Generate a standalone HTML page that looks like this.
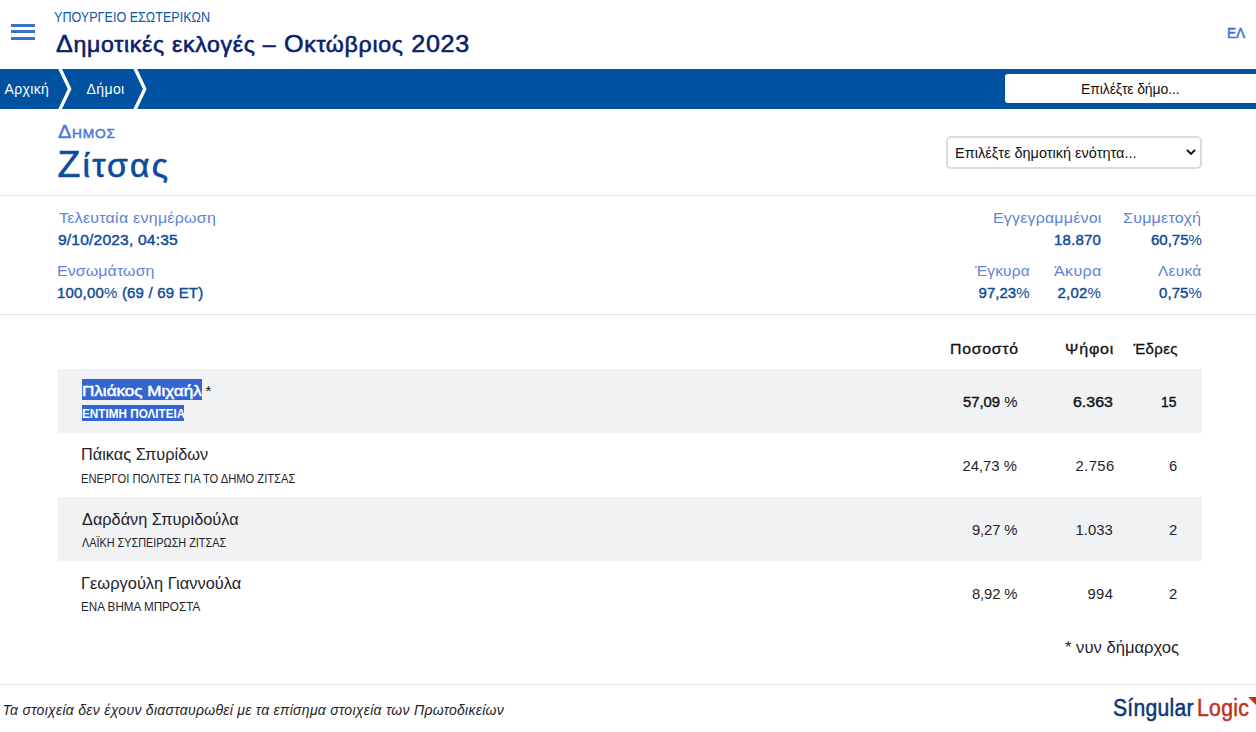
<!DOCTYPE html>
<html lang="el"><head><meta charset="utf-8"><title>Δημοτικές εκλογές – Οκτώβριος 2023</title>
<style>
html,body{margin:0;padding:0;}
body{width:1256px;height:732px;overflow:hidden;position:relative;background:#fff;font-family:"Liberation Sans",sans-serif;}
.t{position:absolute;white-space:nowrap;line-height:1.118;transform-origin:0 0;}
.bm{display:inline-block;width:0;height:0;vertical-align:baseline;}
.pc{font-weight:400;-webkit-text-stroke-width:0;}
.pcs{font-weight:400;-webkit-text-stroke-width:0;}
.abs{position:absolute;}


</style></head><body>
<div class="abs" style="left:11px;top:24px;width:24px;height:3px;background:#3b70cc"></div>
<div class="abs" style="left:11px;top:30.3px;width:24px;height:3px;background:#3b70cc"></div>
<div class="abs" style="left:11px;top:37px;width:24px;height:3px;background:#3b70cc"></div>
<div class="abs" style="left:0;top:69px;width:1256px;height:40px;background:#0052a0"></div>
<svg class="abs" style="left:0;top:69px" width="200" height="40"><polygon points="58.3,0 62,0 71.5,20 62,40 58.3,40 67.8,20" fill="#fff"/><polygon points="133.4,0 137.2,0 146.6,20 137.2,40 133.4,40 142.9,20" fill="#fff"/></svg>
<div class="abs" style="left:1005px;top:74px;width:260px;height:29px;background:#fff;border-radius:3px"></div>
<div class="abs" style="left:946px;top:136px;width:252px;height:28.7px;border:2px solid #d6dce4;border-radius:5px;background:#fff"></div>
<svg class="abs" style="left:1185px;top:148px" width="12" height="9"><polyline points="1.9,1.9 6,5.9 10.1,1.9" fill="none" stroke="#111" stroke-width="2"/></svg>
<div class="abs" style="left:0;top:195px;width:1256px;height:1px;background:#dfe3e8"></div>
<div class="abs" style="left:0;top:314px;width:1256px;height:1px;background:#dfe3e8"></div>
<div class="abs" style="left:58px;top:369px;width:1144px;height:64px;background:#f1f2f4"></div>
<div class="abs" style="left:58px;top:497px;width:1144px;height:64px;background:#f1f2f4"></div>
<div class="abs" style="left:82px;top:379px;width:120px;height:21px;background:#3365d3"></div>
<div class="abs" style="left:82px;top:405px;width:102px;height:16px;background:#3365d3"></div>
<div class="abs" style="left:0;top:684px;width:1256px;height:1px;background:#dfe3e8"></div>
<svg class="abs" style="left:1240px;top:690px" width="16" height="20"><polygon points="8.3,7 16,7 16,15" fill="#c0301c"/></svg>

<div id="ministry" class="t" style="left:54.00px;top:9.00px;font-size:14.50px;font-weight:400;color:#0e58a8;transform:scaleX(0.8668);">ΥΠΟΥΡΓΕΙΟ ΕΣΩΤΕΡΙΚΩΝ<i class="bm"></i></div>
<div id="title" class="t" style="left:55.50px;top:30.60px;font-size:23.50px;font-weight:400;-webkit-text-stroke:0.55px #08216c;color:#08216c;letter-spacing:0.629px;transform:scaleX(1.0700);">Δ<span style="font-size:0.92em">ημοτικές εκλογές –</span> Ο<span style="font-size:0.92em">κτώβριος</span> 2023<i class="bm"></i></div>
<div id="lang" class="t" style="left:1227.00px;top:23.91px;font-size:15.20px;font-weight:400;-webkit-text-stroke:0.5px #3b6fd4;color:#3b6fd4;transform:scaleX(0.8943);">ΕΛ<i class="bm"></i></div>
<div id="bc1" class="t" style="left:4.50px;top:82.00px;font-size:14.00px;font-weight:400;color:#ffffff;letter-spacing:0.360px;">Αρχική<i class="bm"></i></div>
<div id="bc2" class="t" style="left:86.50px;top:82.00px;font-size:14.00px;font-weight:400;color:#ffffff;letter-spacing:0.405px;">Δήμοι<i class="bm"></i></div>
<div id="search" class="t" style="left:1081.00px;top:81.60px;font-size:14.00px;font-weight:400;color:#111111;letter-spacing:-0.120px;">Επιλέξτε δήμο...<i class="bm"></i></div>
<div id="dimos" class="t" style="left:58.00px;top:120.81px;font-size:18.90px;font-weight:400;-webkit-text-stroke:0.5px #4a7ad6;color:#4a7ad6;letter-spacing:0.683px;transform:scaleX(1.0600);font-variant:small-caps;">Δημος<i class="bm"></i></div>
<div id="zitsas" class="t" style="left:57.50px;top:143.91px;font-size:37.40px;font-weight:400;-webkit-text-stroke:0.6px #0b4a9e;color:#0b4a9e;letter-spacing:2.160px;">Ζ<span style="font-size:0.9em">ίτσας</span><i class="bm"></i></div>
<div id="seltxt" class="t" style="left:955.00px;top:145.00px;font-size:14.50px;font-weight:400;color:#111111;letter-spacing:0.007px;">Επιλέξτε δημοτική ενότητα...<i class="bm"></i></div>
<div id="lbl1" class="t" style="left:58.50px;top:209.32px;font-size:15.50px;font-weight:400;color:#5f82d6;letter-spacing:0.257px;transform:scaleX(1.0300);">Τελευταία ενημέρωση<i class="bm"></i></div>
<div id="val1" class="t" style="left:58.00px;top:231.82px;font-size:15.00px;font-weight:400;-webkit-text-stroke:0.42px #0f4a98;color:#0f4a98;letter-spacing:0.167px;transform:scaleX(1.0400);">9/10/2023, 04:35<i class="bm"></i></div>
<div id="lbl2" class="t" style="left:57.00px;top:262.21px;font-size:15.50px;font-weight:400;color:#5f82d6;letter-spacing:0.089px;transform:scaleX(1.0300);">Ενσωμάτωση<i class="bm"></i></div>
<div id="val2" class="t" style="left:57.00px;top:284.71px;font-size:15.00px;font-weight:400;-webkit-text-stroke:0.42px #0f4a98;color:#0f4a98;letter-spacing:0.189px;">100,00<span class="pc">%</span> (69 / 69 ΕΤ)<i class="bm"></i></div>
<div id="lbl3" class="t" style="left:993.00px;top:209.00px;font-size:15.50px;font-weight:400;color:#5f82d6;letter-spacing:0.186px;transform:scaleX(1.0300);">Εγγεγραμμένοι<i class="bm"></i></div>
<div id="lbl4" class="t" style="left:1123.00px;top:209.00px;font-size:15.50px;font-weight:400;color:#5f82d6;letter-spacing:0.173px;transform:scaleX(1.0400);">Συμμετοχή<i class="bm"></i></div>
<div id="val3" class="t" style="left:1054.00px;top:231.82px;font-size:15.00px;font-weight:400;-webkit-text-stroke:0.42px #0f4a98;color:#0f4a98;letter-spacing:0.216px;">18.870<i class="bm"></i></div>
<div id="val4" class="t" style="left:1151.00px;top:231.82px;font-size:15.00px;font-weight:400;-webkit-text-stroke:0.42px #0f4a98;color:#0f4a98;">60,75<span class="pc">%</span><i class="bm"></i></div>
<div id="lbl5" class="t" style="left:975.00px;top:262.00px;font-size:15.50px;font-weight:400;color:#5f82d6;letter-spacing:0.144px;">Έγκυρα<i class="bm"></i></div>
<div id="lbl6" class="t" style="left:1053.50px;top:262.00px;font-size:15.50px;font-weight:400;color:#5f82d6;letter-spacing:0.286px;transform:scaleX(1.0400);">Άκυρα<i class="bm"></i></div>
<div id="lbl7" class="t" style="left:1158.00px;top:262.00px;font-size:15.50px;font-weight:400;color:#5f82d6;letter-spacing:0.225px;">Λευκά<i class="bm"></i></div>
<div id="val5" class="t" style="left:978.50px;top:284.91px;font-size:15.00px;font-weight:400;-webkit-text-stroke:0.42px #0f4a98;color:#0f4a98;letter-spacing:0.036px;">97,23<span class="pc">%</span><i class="bm"></i></div>
<div id="val6" class="t" style="left:1057.50px;top:284.91px;font-size:15.00px;font-weight:400;-webkit-text-stroke:0.42px #0f4a98;color:#0f4a98;letter-spacing:0.225px;">2,02<span class="pc">%</span><i class="bm"></i></div>
<div id="val7" class="t" style="left:1159.00px;top:284.91px;font-size:15.00px;font-weight:400;-webkit-text-stroke:0.42px #0f4a98;color:#0f4a98;letter-spacing:0.090px;">0,75<span class="pc">%</span><i class="bm"></i></div>
<div id="h1" class="t" style="left:949.50px;top:340.60px;font-size:15.00px;font-weight:400;-webkit-text-stroke:0.3px #111111;color:#111111;letter-spacing:0.637px;transform:scaleX(1.0600);">Ποσοστό<i class="bm"></i></div>
<div id="h2" class="t" style="left:1065.00px;top:340.60px;font-size:15.00px;font-weight:400;-webkit-text-stroke:0.3px #111111;color:#111111;letter-spacing:0.737px;transform:scaleX(1.0700);">Ψήφοι<i class="bm"></i></div>
<div id="h3" class="t" style="left:1133.50px;top:340.60px;font-size:15.00px;font-weight:400;-webkit-text-stroke:0.3px #111111;color:#111111;letter-spacing:0.338px;">Έδρες<i class="bm"></i></div>
<div id="n1" class="t" style="left:81.50px;top:381.51px;font-size:15.40px;font-weight:400;-webkit-text-stroke:0.55px #ffffff;color:#ffffff;transform:scaleX(1.1095);">Πλιάκος Μιχαήλ<i class="bm"></i></div>
<div id="star" class="t" style="left:205.50px;top:382.51px;font-size:14.80px;font-weight:400;color:#111111;">*<i class="bm"></i></div>
<div id="p1" class="t" style="left:81.50px;top:407.60px;font-size:12.00px;font-weight:700;color:#ffffff;transform:scaleX(0.9776);">ΕΝΤΙΜΗ ΠΟΛΙΤΕΙΑ<i class="bm"></i></div>
<div id="pc1" class="t" style="left:963.00px;top:393.90px;font-size:14.80px;font-weight:400;-webkit-text-stroke:0.4px #111111;color:#111111;transform:scaleX(1.0026);">57,09 <span class="pcs">%</span><i class="bm"></i></div>
<div id="v1" class="t" style="left:1073.00px;top:393.90px;font-size:14.80px;font-weight:400;-webkit-text-stroke:0.4px #111111;color:#111111;transform:scaleX(1.0779);">6.363<i class="bm"></i></div>
<div id="s1" class="t" style="left:1161.00px;top:393.90px;font-size:14.80px;font-weight:400;-webkit-text-stroke:0.4px #111111;color:#111111;transform:scaleX(0.9351);">15<i class="bm"></i></div>
<div id="n2" class="t" style="left:81.00px;top:446.00px;font-size:15.70px;font-weight:400;color:#1f2329;transform:scaleX(1.0415);">Πάικας Σπυρίδων<i class="bm"></i></div>
<div id="p2" class="t" style="left:81.00px;top:473.00px;font-size:12.30px;font-weight:400;color:#1f2329;transform:scaleX(0.9087);">ΕΝΕΡΓΟΙ ΠΟΛΙΤΕΣ ΓΙΑ ΤΟ ΔΗΜΟ ΖΙΤΣΑΣ<i class="bm"></i></div>
<div id="pc2" class="t" style="left:962.50px;top:458.01px;font-size:14.80px;font-weight:400;color:#1f2329;">24,73 %<i class="bm"></i></div>
<div id="v2" class="t" style="left:1075.50px;top:458.01px;font-size:14.80px;font-weight:400;color:#1f2329;letter-spacing:0.405px;">2.756<i class="bm"></i></div>
<div id="s2" class="t" style="left:1169.00px;top:458.01px;font-size:14.80px;font-weight:400;color:#1f2329;">6<i class="bm"></i></div>
<div id="n3" class="t" style="left:82.00px;top:510.50px;font-size:15.70px;font-weight:400;color:#1f2329;transform:scaleX(1.0392);">Δαρδάνη Σπυριδούλα<i class="bm"></i></div>
<div id="p3" class="t" style="left:82.00px;top:536.81px;font-size:12.30px;font-weight:400;color:#1f2329;transform:scaleX(0.8820);">ΛΑΪΚΗ ΣΥΣΠΕΙΡΩΣΗ ΖΙΤΣΑΣ<i class="bm"></i></div>
<div id="pc3" class="t" style="left:972.00px;top:522.31px;font-size:14.80px;font-weight:400;color:#1f2329;letter-spacing:-0.144px;">9,27 %<i class="bm"></i></div>
<div id="v3" class="t" style="left:1075.50px;top:522.31px;font-size:14.80px;font-weight:400;color:#1f2329;letter-spacing:0.045px;">1.033<i class="bm"></i></div>
<div id="s3" class="t" style="left:1169.00px;top:522.31px;font-size:14.80px;font-weight:400;color:#1f2329;">2<i class="bm"></i></div>
<div id="n4" class="t" style="left:81.00px;top:574.91px;font-size:15.70px;font-weight:400;color:#1f2329;transform:scaleX(1.0470);">Γεωργούλη Γιαννούλα<i class="bm"></i></div>
<div id="p4" class="t" style="left:81.00px;top:600.81px;font-size:12.30px;font-weight:400;color:#1f2329;transform:scaleX(0.9490);">ΕΝΑ ΒΗΜΑ ΜΠΡΟΣΤΑ<i class="bm"></i></div>
<div id="pc4" class="t" style="left:972.00px;top:586.01px;font-size:14.80px;font-weight:400;color:#1f2329;letter-spacing:-0.144px;">8,92 %<i class="bm"></i></div>
<div id="v4" class="t" style="left:1087.50px;top:586.01px;font-size:14.80px;font-weight:400;color:#1f2329;letter-spacing:0.360px;">994<i class="bm"></i></div>
<div id="s4" class="t" style="left:1169.00px;top:586.01px;font-size:14.80px;font-weight:400;color:#1f2329;">2<i class="bm"></i></div>
<div id="note" class="t" style="left:1064.50px;top:638.71px;font-size:15.80px;font-weight:400;color:#1f2329;transform:scaleX(1.0516);">* νυν δήμαρχος<i class="bm"></i></div>
<div id="foot" class="t" style="left:2.50px;top:703.00px;font-size:14.00px;font-weight:400;color:#1f2329;letter-spacing:0.286px;font-style:italic;">Τα στοιχεία δεν έχουν διασταυρωθεί με τα επίσημα στοιχεία των Πρωτοδικείων<i class="bm"></i></div>
<div id="logo1" class="t" style="left:1113.00px;top:694.81px;font-size:23.50px;font-weight:400;-webkit-text-stroke:0.5px #0b3575;color:#0b3575;letter-spacing:0.297px;transform:scaleX(0.9000);">S&iacute;ngular<i class="bm"></i></div>
<div id="logo2" class="t" style="left:1197.00px;top:694.90px;font-size:23.50px;font-weight:400;-webkit-text-stroke:0.5px #c0301c;color:#c0301c;letter-spacing:0.363px;transform:scaleX(0.9000);">Logic<i class="bm"></i></div>
</body></html>
